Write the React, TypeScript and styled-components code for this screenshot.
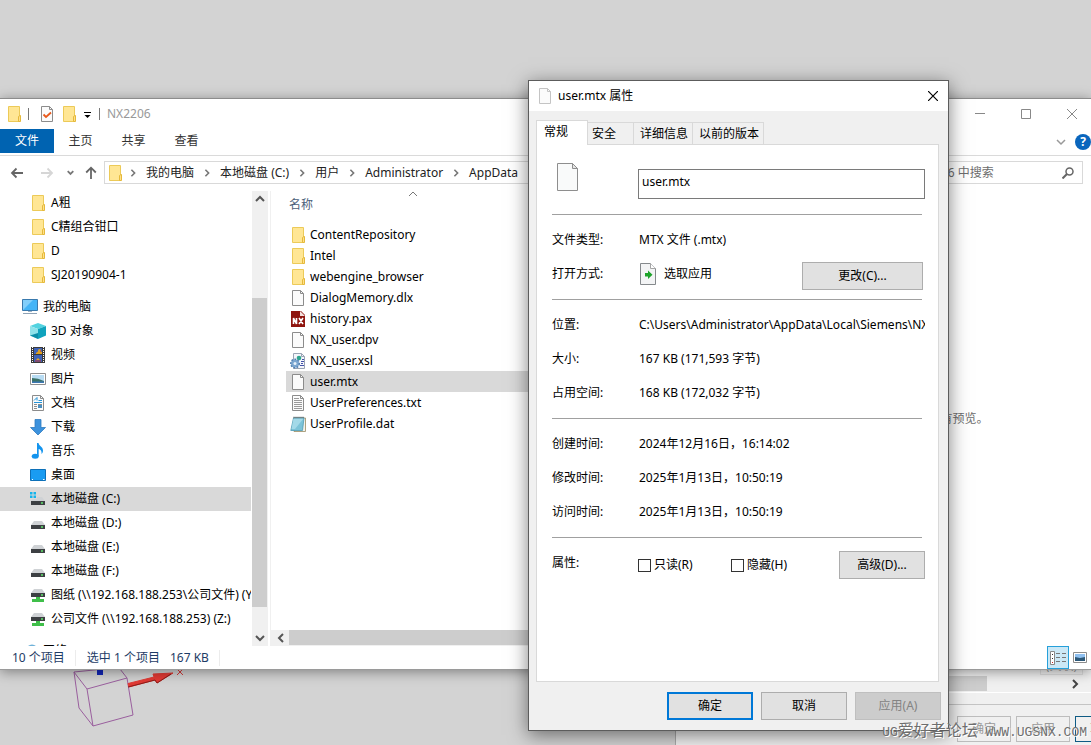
import React from 'react';
import styled, { createGlobalStyle, css } from 'styled-components';

const GlobalStyle = createGlobalStyle`
  *, *::before, *::after { box-sizing: border-box; }
  body {
    margin: 0;
    background: #d3d3d3;
    color: #000;
    font: 12px/16px "Noto Sans", "Noto Sans CJK SC", sans-serif;
  }
  button, input { font: inherit; color: inherit; margin: 0; padding: 0; border: 0; background: none; border-radius: 0; }
  a { color: inherit; text-decoration: none; }
  ul { list-style: none; margin: 0; padding: 0; }
  svg { display: block; flex: none; }
`;

/* ---------- desktop ---------- */

const Desktop = styled.main`
  position: relative;
  min-height: 100vh;
  overflow: hidden;
`;

const Axis = styled.svg`
  position: absolute;
  left: 68px;
  bottom: 10px;
`;

const Watermark = styled.p`
  position: absolute;
  right: 4px;
  bottom: 1px;
  margin: 0;
  white-space: nowrap;
  pointer-events: none;
  color: #6e6e6e;
  text-shadow: 1px 1px 0 #fff;
  font: 16px/22px "Noto Sans CJK SC", sans-serif;
  span { font: 13px/22px "Liberation Mono", monospace; }
`;

/* ---------- icons ---------- */

const FolderIcon = () => (
  <svg width="16" height="16" viewBox="0 0 16 16">
    <path d="M2.500.5h11v15h-11z" fill="#ffe694" stroke="#ecca58" />
    <path d="M12.500 10.500l1.500-1h.5v6h-2z" fill="#ffe08a" stroke="#e5b93a" />
  </svg>
);

const PageShape = ({ muted }: { muted?: boolean }) => (
  <>
    <path d="M2.500.5h8l3 3v12h-11z" fill="#fbfbfb" stroke={muted ? '#c4c4c4' : '#8c8c8c'} />
    <path d="M10.500.5v3h3" fill="none" stroke={muted ? '#c4c4c4' : '#8c8c8c'} />
  </>
);

const PageIcon = ({ muted }: { muted?: boolean }) => (
  <svg width="16" height="16" viewBox="0 0 16 16"><PageShape muted={muted} /></svg>
);

const LargePageIcon = () => (
  <svg width="22" height="28" viewBox="0 0 22 28">
    <path d="M.5.5h15l5 5v22H.5z" fill="#f9fafa" stroke="#8e8e8e" />
    <path d="M15.500.5v5h5z" fill="#e6e6e6" stroke="#8e8e8e" />
  </svg>
);

const CheckPageIcon = () => (
  <svg width="16" height="16" viewBox="0 0 16 16">
    <PageShape />
    <path d="M4.500 8.500l2.500 2.500L12 6.500" fill="none" stroke="#e8591c" strokeWidth="1.800" />
  </svg>
);

const TextPageIcon = () => (
  <svg width="16" height="16" viewBox="0 0 16 16">
    <PageShape />
    <path d="M4 3.500h5M4 5.500h8M4 7.500h8M4 9.500h8M4 11.500h8M4 13.500h8" stroke="#9a9a9a" />
  </svg>
);

const DocumentsIcon = () => (
  <svg width="16" height="16" viewBox="0 0 16 16">
    <PageShape />
    <path d="M4 5.500l3-3v3M8.500 5.500H12M4 7.500h8" fill="none" stroke="#2594d8" />
    <path d="M4 9.500h3M8 9.500h4M4 11.500h3M4 13.500h3" stroke="#8d8d8d" />
    <path d="M8 10h4v3H8z" fill="#4a8fc0" />
  </svg>
);

const NxIcon = () => (
  <svg width="16" height="16" viewBox="0 0 16 16">
    <path d="M1 0h10l4 4v12H1z" fill="#8f150f" />
    <path d="M10 0v5h5z" fill="#f4e0de" />
    <path d="M3.500 13V7l3 6V7M9 7l4 6M13 7l-4 6" fill="none" stroke="#fff" strokeWidth="1.600" />
  </svg>
);

const XslIcon = () => (
  <svg width="16" height="16" viewBox="0 0 16 16">
    <path d="M3.500.5h8l3 3v12h-11z" fill="#f4f6fb" stroke="#9aa4b4" />
    <path d="M11.500.5v3h3" fill="none" stroke="#9aa4b4" />
    <circle cx="9" cy="5" r="2.300" fill="#2da58e" />
    <path d="M11 8.500h3M11 10.500h2M10 12.500h4M12 6.500h2" stroke="#4452a8" />
    <circle cx="5" cy="10.500" r="4" fill="#7ba6d0" />
    <circle cx="5" cy="10.500" r="4.300" fill="none" stroke="#4f7fb2" strokeWidth="1.400" strokeDasharray="1.700 1.500" />
    <circle cx="5" cy="10.500" r="1.500" fill="#e8f1fa" />
  </svg>
);

const NotepadIcon = () => (
  <svg width="16" height="16" viewBox="0 0 16 16">
    <path d="M4 2h11.500v13.500H4z" fill="#f4f2ea" stroke="#9b8b62" strokeWidth=".8" />
    <path d="M3.500 2h10.500l-1.500 12.500H.8z" fill="#7cc3d8" stroke="#4d9bb4" strokeWidth=".8" />
    <path d="M3.500 2.500h10L5 13H1.500z" fill="#a3d9e8" />
    <path d="M3.500 1.500H14" stroke="#3e4a50" strokeWidth="1.500" strokeDasharray="1 1" />
  </svg>
);

const ComputerIcon = () => (
  <svg width="16" height="16" viewBox="0 0 16 16">
    <path d="M.5.5h15v11H.5z" fill="#43b4f7" stroke="#3979ad" />
    <path d="M1 11L11 1H1z" fill="#82cffb" />
    <path d="M6 12.500h4" stroke="#9fb3c4" />
    <path d="M1 14.500h14" stroke="#8fa2b5" />
  </svg>
);

const CubeIcon = () => (
  <svg width="16" height="16" viewBox="0 0 16 16">
    <path d="M0 3l8-3 8 3-8 3z" fill="#52d3e0" />
    <path d="M0 3l8 3v10l-8-3.500z" fill="#8fe2ea" />
    <path d="M16 3L8 6v10l8-3.500z" fill="#10a3bd" />
    <path d="M0 12.500L8 10v6z" fill="#0d8ea8" />
  </svg>
);

const VideoIcon = () => (
  <svg width="16" height="16" viewBox="0 0 16 16">
    <path d="M1 0h14v16H1z" fill="#3a3a3a" />
    <path d="M2.500 0v16M13.500 0v16" stroke="#fff" strokeDasharray="1 1" />
    <path d="M4 1h8v6H4zM4 8h8v7H4z" fill="#3d62b8" />
    <path d="M6 6l3-2.500L12 5v2H6zM6 13l2-2 2 2z" fill="#e0a020" />
    <circle cx="9.500" cy="3.500" r="1.500" fill="#d8a32a" />
    <path d="M5 14h6M10 4h1" stroke="#c8352a" />
  </svg>
);

const PictureIcon = () => (
  <svg width="16" height="16" viewBox="0 0 16 16">
    <path d="M.5 2.500h15v11H.5z" fill="#fff" stroke="#8f8f8f" />
    <path d="M2 4h12v8H2z" fill="#b8dcf3" />
    <path d="M2 7q6 0 12 3v2H2z" fill="#3c7268" />
    <path d="M2 10.500h12V12H2z" fill="#3d78b4" />
  </svg>
);

const DownloadIcon = () => (
  <svg width="16" height="16" viewBox="0 0 16 16">
    <path d="M5 .5h6v8h4.500L8 16 .5 8.500H5z" fill="#3c92dd" stroke="#2f7bc0" strokeWidth=".8" />
  </svg>
);

const MusicIcon = () => (
  <svg width="16" height="16" viewBox="0 0 16 16">
    <ellipse cx="5.200" cy="13.300" rx="3.500" ry="2.500" fill="#1394ee" />
    <path d="M7 0h1.500c.5 3 4.500 3.500 4.500 7.500 0 1.500-.5 2.500-1.500 3.500C12 8 10.500 6.500 8.700 6v7H7z" fill="#1394ee" />
  </svg>
);

const DesktopIcon = () => (
  <svg width="16" height="16" viewBox="0 0 16 16">
    <path d="M.5 2.500h15v11H.5z" fill="#199cf2" stroke="#0d70b8" />
    <path d="M2 12.500h1M13 12.500h1.500" stroke="#fff" />
  </svg>
);

const DriveIcon = ({ system, network }: { system?: boolean; network?: boolean }) => (
  <svg width="16" height="16" viewBox="0 0 16 16">
    <g transform={network ? 'translate(0 -4)' : undefined}>
      <path d="M4 6h8l3 4H1z" fill="#cfd2d5" />
      <path d="M1 10h14v4H1z" fill="#3d4043" />
      <path d="M11 12h2" stroke="#5fe36b" strokeWidth="1.300" />
    </g>
    {system && (
      <>
        <path d="M0 1h7v7H0z" fill="#d9d9d9" />
        <path d="M0 1h2.500v2.500H0zM3.500 1H6v2.500H3.500zM0 4.500h2.500V7H0zM3.500 4.500H6V7H3.500z" fill="#14b4ec" />
      </>
    )}
    {network && <path d="M6 10h4v2h4v3H2v-3h4z" fill="#3fbf4a" />}
  </svg>
);

const NetworkIcon = () => (
  <svg width="16" height="16" viewBox="0 0 16 16">
    <circle cx="10" cy="7.500" r="6" fill="#6fb1d8" />
    <path d="M1 7h8v6H1z" fill="#4aa8e0" />
  </svg>
);

const OpenWithIcon = () => (
  <svg width="16" height="22" viewBox="0 0 16 22">
    <path d="M.5.5h10l5 5v16H.5z" fill="#f3f4f5" stroke="#85898c" />
    <path d="M10.500.5v5h5" fill="#fff" stroke="#a5a5a5" />
    <path d="M5 10h3V7.500l4.500 4.300L8 16v-2.500H5z" fill="#1da32a" />
  </svg>
);

type Dir = 'up' | 'down' | 'left' | 'right';
const chevrons: Record<Dir, string> = {
  up: 'M1 7l4-4 4 4',
  down: 'M1 3l4 4 4-4',
  left: 'M7 1L3 5l4 4',
  right: 'M3 1l4 4-4 4',
};
const Chevron = ({ dir, size = 10, color = '#555', weight = 2 }: { dir: Dir; size?: number; color?: string; weight?: number }) => (
  <svg width={size} height={size} viewBox="0 0 10 10">
    <path d={chevrons[dir]} fill="none" stroke={color} strokeWidth={weight} />
  </svg>
);

const BackArrow = ({ color, flip }: { color: string; flip?: boolean }) => (
  <svg width="14" height="12" viewBox="0 0 14 12">
    <path transform={flip ? 'matrix(-1 0 0 1 14 0)' : undefined} d="M13 6H2M6.500 1.500L2 6l4.500 4.500" fill="none" stroke={color} strokeWidth="1.800" />
  </svg>
);

const UpArrow = () => (
  <svg width="12" height="13" viewBox="0 0 12 13">
    <path d="M6 13V2M1.200 6.500L6 1.700l4.800 4.800" fill="none" stroke="#666" strokeWidth="1.800" />
  </svg>
);

/* ---------- explorer window ---------- */

const Explorer = styled.section`
  position: absolute;
  inset: 98px 0 75px 0;
  display: flex;
  flex-direction: column;
  background: #fff;
  border-top: 1px solid #8c8c8c;
  border-bottom: 1px solid #9a9a9a;
  box-shadow: 0 2px 12px rgba(0, 0, 0, 0.4);
`;

const TitleBar = styled.header`
  display: flex;
  align-items: center;
  height: 30px;
  padding-left: 6px;
`;

const QuickAccess = styled.div`
  flex: 1;
  display: flex;
  align-items: center;
`;

const QuickButton = styled.button`
  display: flex;
  justify-content: center;
  width: 22px;
`;

const Bar = styled.span`
  width: 1px;
  height: 12px;
  background: #777;
`;

const WindowTitle = styled.h2`
  margin: 0;
  font-size: 12px;
  font-weight: 400;
  color: #999;
`;

const QuickGap = styled.span`
  display: flex;
  align-items: center;
  gap: 8px;
  margin: 0 7px 0 6px;
  & ~ & { margin-left: 4px; }
`;

const WindowControls = styled.div`
  display: flex;
  gap: 8px;
`;

const WindowButton = styled.button`
  display: grid;
  place-items: center;
  width: 38px;
  height: 28px;
`;

const Ribbon = styled.nav`
  display: flex;
  align-items: flex-start;
  height: 27px;
  border-bottom: 1px solid #dadada;
`;

const RibbonTab = styled.button<{ $file?: boolean }>`
  width: ${p => (p.$file ? 54 : 53)}px;
  height: 24px;
  color: #333;
  ${p => p.$file && css`background: #0063b1; color: #fff;`}
`;

const RibbonEnd = styled.div`
  display: flex;
  align-items: center;
  gap: 9px;
  height: 26px;
  margin-left: auto;
`;

const HelpButton = styled.button`
  width: 16px;
  height: 16px;
  border-radius: 50%;
  background: #0a66bd;
  color: #fff;
  font-weight: 700;
  line-height: 16px;
`;

const AddressRow = styled.div`
  display: flex;
  height: 35px;
  padding: 5px 8px 7px 2px;
`;

const NavButton = styled.button<{ $width: number }>`
  display: grid;
  place-items: center;
  width: ${p => p.$width}px;
`;

const Crumbs = styled.div`
  flex: 1;
  display: flex;
  align-items: center;
  padding-left: 2px;
  border: 1px solid #d9d9d9;
  overflow: hidden;
  white-space: nowrap;
  color: #222;
  & > svg { margin-right: -3px; }
`;

const CrumbArrow = styled.span`
  display: grid;
  place-items: center;
  width: 26px;
`;

const Search = styled.label`
  display: flex;
  align-items: center;
  width: 206px;
  margin-left: 12px;
  padding: 0 8px 0 18px;
  border: 1px solid #d9d9d9;
  input { flex: 1; min-width: 0; outline: 0; }
  input::placeholder { color: #6d6d6d; opacity: 1; }
`;

const Body = styled.div`
  flex: 1;
  min-height: 0;
  display: flex;
`;

const Sidebar = styled.nav`
  width: 251px;
  overflow: hidden;
`;

const Tree = styled.ul`
  & + & { margin-top: 8px; }
`;

const TreeLink = styled.a<{ $root?: boolean; $active?: boolean }>`
  display: flex;
  align-items: center;
  gap: 5px;
  height: 24px;
  padding-left: ${p => (p.$root ? 22 : 30)}px;
  background: ${p => (p.$active ? '#d9d9d9' : 'transparent')};
  white-space: nowrap;
`;

const VScroll = styled.div`
  display: flex;
  flex-direction: column;
  width: 16px;
  margin: 0 2px 0 1px;
  background: #f0f0f0;
`;

const ScrollButton = styled.button`
  display: grid;
  place-items: center;
  flex: none;
  width: 16px;
  height: 16px;
`;

const VTrack = styled.div`
  flex: 1;
  padding: 91px 1px 23px 0;
`;

const Thumb = styled.div`
  width: 100%;
  height: 100%;
  background: #cdcdcd;
`;

const FilePane = styled.div`
  flex: 1;
  min-width: 0;
  display: flex;
  flex-direction: column;
  border-left: 1px solid #f0f0f0;
`;

const FileArea = styled.div`
  flex: 1;
  overflow: hidden;
  padding-left: 15px;
`;

const FileTable = styled.table`
  width: 100%;
  table-layout: fixed;
  border-collapse: collapse;
  th, td { padding: 0; }
  th:first-child { width: 254px; }
`;

const HeadCell = styled.th`
  position: relative;
  height: 33px;
  padding: 6px 3px !important;
  vertical-align: top;
  text-align: left;
  font-weight: 400;
  color: #4c607a;
  svg { position: absolute; top: -2px; left: 50%; margin-left: -5px; }
`;

const FileRow = styled.tr<{ $selected?: boolean }>`
  height: 21px;
  background: ${p => (p.$selected ? '#d9d9d9' : 'transparent')};
`;

const FileName = styled.a`
  display: flex;
  align-items: center;
  gap: 4px;
  height: 21px;
  padding-left: 4px;
`;

const HScroll = styled.div`
  display: flex;
  height: 16px;
  padding: 0 0 1px 2px;
  background: #f0f0f0;
`;

const Preview = styled.aside`
  display: grid;
  place-items: center;
  width: 266px;
  border-left: 1px solid #f0f0f0;
  color: #6d6d6d;
`;

const StatusBar = styled.footer`
  display: flex;
  align-items: center;
  height: 23px;
  padding-left: 12px;
  color: #1e3c66;
`;

const StatusItem = styled.span<{ $divided?: boolean }>`
  margin-right: ${p => (p.$divided ? 11 : 10)}px;
  ${p => p.$divided && css`padding-right: 10px; border-right: 1px solid #ececec;`}
`;

const ViewButtons = styled.div`
  display: flex;
  margin-left: auto;
`;

const ViewButton = styled.button<{ $on?: boolean }>`
  display: grid;
  place-items: center;
  width: 22px;
  height: 23px;
  ${p => p.$on && css`background: #cbe8f6; border: 1px solid #26a0da;`}
`;

type Entry = { name: string; icon: React.ReactNode; root?: boolean; active?: boolean };

const quick: Entry[] = ['A粗', 'C精组合钳口', 'D', 'SJ20190904-1'].map(name => ({ name, icon: <FolderIcon /> }));

const computer: Entry[] = [
  { name: '我的电脑', icon: <ComputerIcon />, root: true },
  { name: '3D 对象', icon: <CubeIcon /> },
  { name: '视频', icon: <VideoIcon /> },
  { name: '图片', icon: <PictureIcon /> },
  { name: '文档', icon: <DocumentsIcon /> },
  { name: '下载', icon: <DownloadIcon /> },
  { name: '音乐', icon: <MusicIcon /> },
  { name: '桌面', icon: <DesktopIcon /> },
  { name: '本地磁盘 (C:)', icon: <DriveIcon system />, active: true },
  { name: '本地磁盘 (D:)', icon: <DriveIcon /> },
  { name: '本地磁盘 (E:)', icon: <DriveIcon /> },
  { name: '本地磁盘 (F:)', icon: <DriveIcon /> },
  { name: '图纸 (\\\\192.168.188.253\\公司文件) (Y:)', icon: <DriveIcon network /> },
  { name: '公司文件 (\\\\192.168.188.253) (Z:)', icon: <DriveIcon network /> },
];

const network: Entry[] = [{ name: '网络', icon: <NetworkIcon />, root: true }];

const files: Entry[] = [
  { name: 'ContentRepository', icon: <FolderIcon /> },
  { name: 'Intel', icon: <FolderIcon /> },
  { name: 'webengine_browser', icon: <FolderIcon /> },
  { name: 'DialogMemory.dlx', icon: <PageIcon /> },
  { name: 'history.pax', icon: <NxIcon /> },
  { name: 'NX_user.dpv', icon: <PageIcon /> },
  { name: 'NX_user.xsl', icon: <XslIcon /> },
  { name: 'user.mtx', icon: <PageIcon />, active: true },
  { name: 'UserPreferences.txt', icon: <TextPageIcon /> },
  { name: 'UserProfile.dat', icon: <NotepadIcon /> },
];

const ExplorerWindow = () => (
  <Explorer aria-label="NX2206">
    <TitleBar>
      <QuickAccess>
        <FolderIcon />
        <QuickGap><Bar /></QuickGap>
        <QuickButton aria-label="属性"><CheckPageIcon /></QuickButton>
        <QuickButton aria-label="新建文件夹"><FolderIcon /></QuickButton>
        <QuickGap>
          <svg width="7" height="8" viewBox="0 0 7 8"><path d="M0 2.500h7" stroke="#000" /><path d="M.5 5h6L3.500 8z" /></svg>
          <Bar />
        </QuickGap>
        <WindowTitle>NX2206</WindowTitle>
      </QuickAccess>
      <WindowControls>
        <WindowButton aria-label="最小化"><svg width="10" height="10"><path d="M0 4.500h10" stroke="#888" /></svg></WindowButton>
        <WindowButton aria-label="最大化"><svg width="10" height="10"><path d="M.5.5h9v9h-9z" fill="none" stroke="#888" /></svg></WindowButton>
        <WindowButton aria-label="关闭"><svg width="10" height="10"><path d="M0 0l10 10M10 0L0 10" stroke="#888" /></svg></WindowButton>
      </WindowControls>
    </TitleBar>

    <Ribbon>
      <RibbonTab $file>文件</RibbonTab>
      <RibbonTab>主页</RibbonTab>
      <RibbonTab>共享</RibbonTab>
      <RibbonTab>查看</RibbonTab>
      <RibbonEnd>
        <Chevron dir="down" color="#999" weight={1.5} />
        <HelpButton aria-label="帮助">?</HelpButton>
      </RibbonEnd>
    </Ribbon>

    <AddressRow>
      <NavButton $width={30} aria-label="后退"><BackArrow color="#666" /></NavButton>
      <NavButton $width={30} aria-label="前进"><BackArrow color="#d6d6d6" flip /></NavButton>
      <NavButton $width={16} aria-label="最近"><Chevron dir="down" size={7} color="#777" weight={2.5} /></NavButton>
      <NavButton $width={26} aria-label="向上"><UpArrow /></NavButton>
      <Crumbs>
        <FolderIcon />
        {['我的电脑', '本地磁盘 (C:)', '用户', 'Administrator', 'AppData', 'Local', 'Siemens', 'NX2206'].map((name, i) => (
          <React.Fragment key={name}>
            <CrumbArrow><Chevron dir="right" size={8} color="#777" weight={2} /></CrumbArrow>
            <a href={`#path-${i}`}>{name}</a>
          </React.Fragment>
        ))}
      </Crumbs>
      <Search>
        <input type="search" aria-label="搜索" placeholder="在 NX2206 中搜索" />
        <svg width="12" height="12" viewBox="0 0 12 12">
          <circle cx="7.500" cy="4.500" r="3.500" fill="none" stroke="#666" strokeWidth="1.500" />
          <path d="M5 7L.5 11.500" stroke="#666" strokeWidth="2" />
        </svg>
      </Search>
    </AddressRow>

    <Body>
      <Sidebar>
        {[quick, computer, network].map((group, g) => (
          <Tree key={g}>
            {group.map(e => (
              <li key={e.name}>
                <TreeLink href="#tree" $root={e.root} $active={e.active}>{e.icon}{e.name}</TreeLink>
              </li>
            ))}
          </Tree>
        ))}
      </Sidebar>
      <VScroll>
        <ScrollButton aria-label="向上滚动"><Chevron dir="up" /></ScrollButton>
        <VTrack><Thumb /></VTrack>
        <ScrollButton aria-label="向下滚动"><Chevron dir="down" /></ScrollButton>
      </VScroll>
      <FilePane>
        <FileArea>
          <FileTable>
            <thead>
              <tr><HeadCell>名称<Chevron dir="up" color="#777" weight={1} /></HeadCell><th /></tr>
            </thead>
            <tbody>
              {files.map(f => (
                <FileRow key={f.name} $selected={f.active}>
                  <td><FileName href="#file">{f.icon}{f.name}</FileName></td>
                  <td />
                </FileRow>
              ))}
            </tbody>
          </FileTable>
        </FileArea>
        <HScroll>
          <ScrollButton aria-label="向左滚动"><Chevron dir="left" /></ScrollButton>
          <Thumb />
        </HScroll>
      </FilePane>
      <Preview>没有预览。</Preview>
    </Body>

    <StatusBar>
      <StatusItem $divided>10 个项目</StatusItem>
      <StatusItem>选中 1 个项目</StatusItem>
      <StatusItem $divided>167 KB</StatusItem>
      <ViewButtons>
        <ViewButton $on aria-label="详细信息">
          <svg width="16" height="14" viewBox="0 0 16 14">
            <path d="M.5.5h4v13h-4z" fill="#fff" stroke="#888" />
            <path d="M2 3.500h1M2 7.500h1" stroke="#333" />
            <path d="M2 11.500h1" stroke="#c22" />
            <path d="M6 2.500h4M12 2.500h4M6 6.500h4M12 6.500h4M6 10.500h4M12 10.500h4" stroke="#777" />
          </svg>
        </ViewButton>
        <ViewButton aria-label="大图标">
          <svg width="14" height="12" viewBox="0 0 14 12">
            <path d="M.5.5h13v10H.5z" fill="#fff" stroke="#8c8c8c" />
            <path d="M2 2h10v7H2z" fill="#8fc0f0" />
            <path d="M2 5l5 1 5-1v4H2z" fill="#2c5878" />
          </svg>
        </ViewButton>
      </ViewButtons>
    </StatusBar>
  </Explorer>
);

/* ---------- application panel below the explorer ---------- */

const ToolPanel = styled.section`
  position: absolute;
  left: 675px;
  right: -38px;
  bottom: 0;
  height: 96px;
  display: flex;
  flex-direction: column;
  justify-content: flex-end;
  background: #f0f0f0;
  border-left: 1px solid #aaa;
  color: #999;
`;

const ToolLabel = styled.span`
  align-self: flex-end;
  margin-right: 46px;
  padding: 0 5px;
  border: 1px solid #ddd;
  border-top: 0;
`;

const ToolScroll = styled.div`
  display: flex;
  justify-content: space-between;
  height: 18px;
  padding: 1px 46px 1px 0;
  border-bottom: 1px solid #fff;
`;

const ToolThumb = styled.div`
  width: 311px;
  background: #cdcdcd;
`;

const ToolFooter = styled.div`
  display: flex;
  justify-content: flex-end;
  gap: 5px;
  margin-top: 11px;
  padding: 11px 0 3px;
  border-top: 1px solid #c4c4c4;
`;

const ToolButton = styled.button<{ $primary?: boolean }>`
  width: 54px;
  height: 26px;
  border: 1px solid ${p => (p.$primary ? '#0f5b84' : '#bdbdbd')};
`;

const BackgroundPanel = () => (
  <ToolPanel aria-hidden="true">
    <ToolLabel>(关联)</ToolLabel>
    <ToolScroll>
      <ToolThumb />
      <ScrollButton tabIndex={-1}><Chevron dir="right" color="#444" /></ScrollButton>
    </ToolScroll>
    <ToolFooter>
      <ToolButton tabIndex={-1}>确定</ToolButton>
      <ToolButton tabIndex={-1}>应用</ToolButton>
      <ToolButton tabIndex={-1} $primary>取消</ToolButton>
    </ToolFooter>
  </ToolPanel>
);

/* ---------- properties dialog ---------- */

const Dialog = styled.section`
  position: absolute;
  left: 528px;
  top: 80px;
  width: 421px;
  background: #f0f0f0;
  border: 1px solid #5c5c5c;
  box-shadow: 0 4px 18px rgba(0, 0, 0, 0.5);
`;

const DialogTitle = styled.header`
  display: flex;
  align-items: center;
  gap: 5px;
  height: 30px;
  padding-left: 8px;
  background: #fff;
  h2 { flex: 1; margin: 0; font-size: 12px; font-weight: 400; }
`;

const CloseButton = styled.button`
  display: grid;
  place-items: center;
  width: 30px;
  height: 30px;
`;

const Tabs = styled.div`
  display: flex;
  align-items: flex-end;
  height: 33px;
  padding-left: 7px;
`;

const Tab = styled.button<{ $active?: boolean }>`
  height: 22px;
  padding: 0 4px 0 6px;
  border: 1px solid #d9d9d9;
  border-width: 1px 1px 0 0;
  ${p => p.$active && css`
    height: 25px;
    margin-bottom: -1px;
    padding: 0 19px 3px 7px;
    border-left-width: 1px;
    background: #fff;
    position: relative;
  `}
  ${p => !p.$active && css`&:nth-child(2) { padding: 0 17px 0 4px; }`}
`;

const Panel = styled.div`
  min-height: 538px;
  margin: 0 9px 0 7px;
  padding: 0 13px 0 15px;
  border: 1px solid #d9d9d9;
  background: #fff;
`;

const Identity = styled.div`
  display: flex;
  align-items: flex-start;
  gap: 59px;
  height: 69px;
  padding: 18px 0 0 5px;
`;

const NameInput = styled.input`
  flex: 1;
  min-width: 0;
  height: 30px;
  margin-top: 6px;
  padding: 0 3px 6px;
  border: 1px solid #7a7a7a;
`;

const Section = styled.dl`
  margin: 0;
  padding: 8px 0;
  border-top: 1px solid transparent;
  background: linear-gradient(#a0a0a0, #a0a0a0) 0 0 / calc(100% - 3px) 1px no-repeat border-box;
`;

const Row = styled.div`
  display: flex;
  align-items: center;
  height: 34px;
  dt { width: 86px; }
  dd {
    flex: 1;
    display: flex;
    align-items: center;
    min-width: 0;
    margin: 0;
    padding-left: 1px;
    overflow: hidden;
    white-space: nowrap;
  }
`;

const PushButton = styled.button<{ $default?: boolean; $wide?: boolean; $inRow?: boolean }>`
  flex: none;
  width: ${p => (p.$wide ? 121 : 86)}px;
  height: 28px;
  padding-bottom: 1px;
  border: ${p => (p.$default ? '2px solid #0078d7' : '1px solid #adadad')};
  background: #e1e1e1;
  ${p => p.$inRow && css`margin: 4px 0 0 auto;`}
  ${p => p.$wide && css`margin-right: 2px;`}
  &:disabled { background: #ccc; border-color: #bfbfbf; color: #838383; }
`;

const OpenWith = styled.span`
  display: flex;
  align-items: center;
  gap: 8px;
  padding-left: 1px;
`;

const Check = styled.label`
  display: flex;
  align-items: center;
  gap: 3px;
  width: 93px;
  margin-top: 4px;
  &:first-child { margin-left: -1px; }
  input { appearance: none; width: 13px; height: 13px; border: 1px solid #333; background: #fff; }
  input:checked { background: #0078d7; }
`;

const Actions = styled.footer`
  display: flex;
  justify-content: flex-end;
  gap: 8px;
  padding: 10px 7px 10px 0;
`;

const places = [
  ['位置:', 'C:\\Users\\Administrator\\AppData\\Local\\Siemens\\NX2206'],
  ['大小:', '167 KB (171,593 字节)'],
  ['占用空间:', '168 KB (172,032 字节)'],
];

const dates = [
  ['创建时间:', '2024年12月16日，16:14:02'],
  ['修改时间:', '2025年1月13日，10:50:19'],
  ['访问时间:', '2025年1月13日，10:50:19'],
];

const PropertiesDialog = () => (
  <Dialog role="dialog" aria-labelledby="dialog-title">
    <DialogTitle>
      <PageIcon muted />
      <h2 id="dialog-title">user.mtx 属性</h2>
      <CloseButton aria-label="关闭">
        <svg width="10" height="10"><path d="M0 0l10 10M10 0L0 10" stroke="#000" strokeWidth="1.200" /></svg>
      </CloseButton>
    </DialogTitle>
    <Tabs role="tablist">
      <Tab role="tab" aria-selected="true" $active>常规</Tab>
      <Tab role="tab">安全</Tab>
      <Tab role="tab">详细信息</Tab>
      <Tab role="tab">以前的版本</Tab>
    </Tabs>
    <Panel role="tabpanel">
      <Identity>
        <LargePageIcon />
        <NameInput aria-label="文件名" defaultValue="user.mtx" />
      </Identity>
      <Section>
        <Row><dt>文件类型:</dt><dd>MTX 文件 (.mtx)</dd></Row>
        <Row>
          <dt>打开方式:</dt>
          <dd><OpenWith><OpenWithIcon />选取应用</OpenWith><PushButton $wide $inRow>更改(C)...</PushButton></dd>
        </Row>
      </Section>
      {[places, dates].map((rows, i) => (
        <Section key={i}>
          {rows.map(([label, value]) => <Row key={label}><dt>{label}</dt><dd>{value}</dd></Row>)}
        </Section>
      ))}
      <Section>
        <Row>
          <dt>属性:</dt>
          <dd>
            <Check><input type="checkbox" />只读(R)</Check>
            <Check><input type="checkbox" />隐藏(H)</Check>
            <PushButton $inRow>高级(D)...</PushButton>
          </dd>
        </Row>
      </Section>
    </Panel>
    <Actions>
      <PushButton $default>确定</PushButton>
      <PushButton>取消</PushButton>
      <PushButton disabled>应用(A)</PushButton>
    </Actions>
  </Dialog>
);

export default function App() {
  return (
    <>
      <GlobalStyle />
      <Desktop>
        <Axis width="120" height="66" viewBox="0 0 120 66" aria-hidden="true">
          <path d="M6 3l13 17 40-11-7-9M6 3l5 36 14 18-6-37M25 57l40-11-6-37M6 3l30-3" fill="none" stroke="#9a5f9e" />
          <path d="M29 0h6v6h-6z" fill="#1226b8" />
          <path d="M60 14.500l26-6.500-1-3 20-1-16 10-2-3-26 7z" fill="#e23a34" stroke="#e23a34" />
          <path d="M60 18l27-7 2 3 14-9" fill="none" stroke="#8c1d1a" />
          <path d="M109 6l6-6M115 6l-6-6" fill="none" stroke="#d43a3a" />
        </Axis>
        <BackgroundPanel />
        <ExplorerWindow />
        <PropertiesDialog />
        <Watermark><span>UG</span>爱好者论坛<span> WWW.UGSNX.COM</span></Watermark>
      </Desktop>
    </>
  );
}
